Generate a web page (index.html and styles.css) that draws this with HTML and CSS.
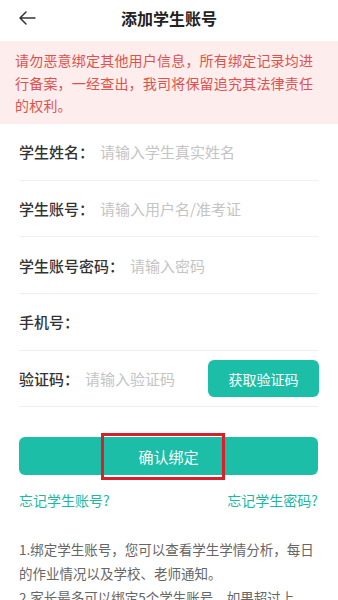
FILE: index.html
```html
<!DOCTYPE html>
<html lang="zh-CN">
<head>
<meta charset="utf-8">
<title>添加学生账号</title>
<link rel="stylesheet" href="styles.css">
</head>
<body>
<div class="page">
  <header class="topbar">
    <span class="back">
      <svg width="18" height="14" viewBox="0 0 18 14"><path d="M17 7H2M8 1L2 7l6 6" fill="none" stroke="#333" stroke-width="1.5" stroke-linecap="round" stroke-linejoin="round"/></svg>
    </span>
    <h1 class="title">添加学生账号</h1>
  </header>
  <div class="notice">请勿恶意绑定其他用户信息，所有绑定记录均进行备案，一经查出，我司将保留追究其法律责任的权利。</div>
  <div class="form">
    <div class="row"><span class="label">学生姓名：</span><span class="ph">请输入学生真实姓名</span></div>
    <div class="row"><span class="label">学生账号：</span><span class="ph">请输入用户名/准考证</span></div>
    <div class="row"><span class="label">学生账号密码：</span><span class="ph">请输入密码</span></div>
    <div class="row"><span class="label">手机号：</span></div>
    <div class="row"><span class="label">验证码：</span><span class="ph">请输入验证码</span><span class="code-btn">获取验证码</span></div>
    <div class="confirm">确认绑定<span class="highlight"></span></div>
    <div class="links"><span>忘记学生账号?</span><span>忘记学生密码?</span></div>
    <div class="notes">
      <div>1.绑定学生账号，您可以查看学生学情分析，每日</div>
      <div>的作业情况以及学校、老师通知。</div>
      <div>2.家长最多可以绑定5个学生账号，如果超过上</div>
    </div>
  </div>
</div>
</body>
</html>
```
FILE: styles.css
```css
* { box-sizing: border-box; margin: 0; padding: 0; }
body {
  margin: 0;
  background: #fff;
  font-family: "Noto Sans CJK SC", "Noto Sans", sans-serif;
  color: #333;
}
.page { width: 338px; height: 600px; overflow: hidden; }
.topbar {
  height: 41px;
  display: flex;
  align-items: center;
  justify-content: center;
  position: relative;
  padding-bottom: 5px;
}
.back {
  position: absolute;
  left: 18px;
  top: 11px;
  display: flex;
}
.title {
  font-size: 16px;
  font-weight: 700;
  color: #222;
  line-height: 20px;
}
.notice {
  background: #fdeeed;
  color: #e0514c;
  font-size: 14px;
  letter-spacing: 0.2px;
  line-height: 22.5px;
  padding: 8px 14px 8px 15px;
  height: 83px;
}
.form { padding: 0 20px 0 19px; }
.row {
  height: 56.7px;
  border-bottom: 1px solid #efefef;
  display: flex;
  align-items: center;
  font-size: 15px;
}
.label { font-weight: 500; color: #333; margin-right: 6px; }
.ph { color: #c4c4c4; flex: 1; }
.code-btn {
  width: 111px;
  height: 37px;
  border-radius: 6px;
  background: #1dbea7;
  color: #fff;
  font-size: 14px;
  display: flex;
  align-items: center;
  justify-content: center;
  margin-right: -1px;
}
.confirm {
  position: relative;
  margin-top: 30px;
  height: 38px;
  border-radius: 6px;
  background: #1dbea7;
  color: #fff;
  font-size: 15px;
  display: flex;
  align-items: center;
  justify-content: center;
}
.highlight {
  position: absolute;
  left: 82px;
  top: -4px;
  width: 124px;
  height: 47px;
  border: 3px solid #d8202b;
}
.links {
  margin-top: 15px;
  display: flex;
  justify-content: space-between;
  font-size: 14px;
  line-height: 20px;
  color: #1db8a4;
}
.notes {
  margin-top: 27px;
  font-size: 13.5px;
  line-height: 24px;
  color: #666;
  white-space: nowrap;
}
```
